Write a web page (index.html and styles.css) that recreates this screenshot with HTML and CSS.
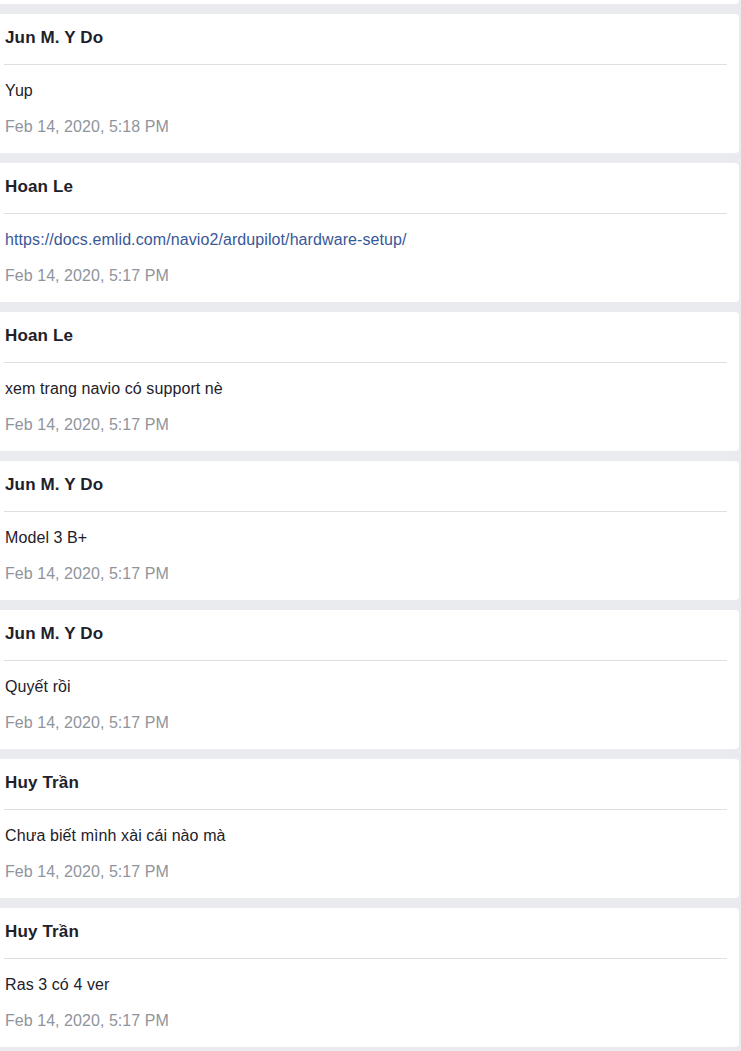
FILE: index.html
```html
<!DOCTYPE html>
<html lang="vi">
<head>
<meta charset="utf-8">
<title>Messages</title>
<link rel="stylesheet" href="styles.css">
</head>
<body>
<div class="list">
  <div class="card-tail"></div>
  <div class="card">
    <div class="card-head"><span class="name">Jun M. Y Do</span></div>
    <div class="card-body">
      <div class="msg">Yup</div>
      <div class="date">Feb 14, 2020, 5:18 PM</div>
    </div>
  </div>
  <div class="card">
    <div class="card-head"><span class="name">Hoan Le</span></div>
    <div class="card-body">
      <div class="msg"><a class="link" href="#">https://docs.emlid.com/navio2/ardupilot/hardware-setup/</a></div>
      <div class="date">Feb 14, 2020, 5:17 PM</div>
    </div>
  </div>
  <div class="card">
    <div class="card-head"><span class="name">Hoan Le</span></div>
    <div class="card-body">
      <div class="msg">xem trang navio có support nè</div>
      <div class="date">Feb 14, 2020, 5:17 PM</div>
    </div>
  </div>
  <div class="card">
    <div class="card-head"><span class="name">Jun M. Y Do</span></div>
    <div class="card-body">
      <div class="msg">Model 3 B+</div>
      <div class="date">Feb 14, 2020, 5:17 PM</div>
    </div>
  </div>
  <div class="card">
    <div class="card-head"><span class="name">Jun M. Y Do</span></div>
    <div class="card-body">
      <div class="msg">Quyết rồi</div>
      <div class="date">Feb 14, 2020, 5:17 PM</div>
    </div>
  </div>
  <div class="card">
    <div class="card-head"><span class="name">Huy Trần</span></div>
    <div class="card-body">
      <div class="msg">Chưa biết mình xài cái nào mà</div>
      <div class="date">Feb 14, 2020, 5:17 PM</div>
    </div>
  </div>
  <div class="card">
    <div class="card-head"><span class="name">Huy Trần</span></div>
    <div class="card-body">
      <div class="msg">Ras 3 có 4 ver</div>
      <div class="date">Feb 14, 2020, 5:17 PM</div>
    </div>
  </div>
</div>
</body>
</html>
```

FILE: styles.css
```css
html, body {
  margin: 0;
  padding: 0;
  background: #e9ebee;
  font-family: "Liberation Sans", Arial, sans-serif;
  color: #1d2129;
  overflow: hidden;
}

.list {
  display: flex;
  flex-direction: column;
  gap: 10px;
  margin-left: -8px;
  width: 747px;
}

.card-tail {
  height: 4px;
  background: #fff;
  border-radius: 0 0 4px 4px;
}

.card {
  background: #fff;
  border-radius: 4px;
  padding: 0 12px;
  height: 139px;
  box-sizing: border-box;
}

.card-head {
  padding: 14px 0 16px;
  border-bottom: 1px solid #dddfe2;
}

.name {
  display: block;
  font-size: 17px;
  line-height: 20px;
  font-weight: bold;
  color: #1d2129;
  padding-left: 1px;
  letter-spacing: 0.15px;
}

.card-body {
  padding: 16px 0 16px;
  display: flex;
  flex-direction: column;
  gap: 16px;
}

.msg {
  font-size: 16px;
  line-height: 20px;
  padding-left: 1px;
  letter-spacing: 0.09px;
}

.date {
  font-size: 16px;
  line-height: 20px;
  color: #90949c;
  padding-left: 1px;
  letter-spacing: 0.05px;
}

.link {
  color: #385898;
  text-decoration: none;
}
```
